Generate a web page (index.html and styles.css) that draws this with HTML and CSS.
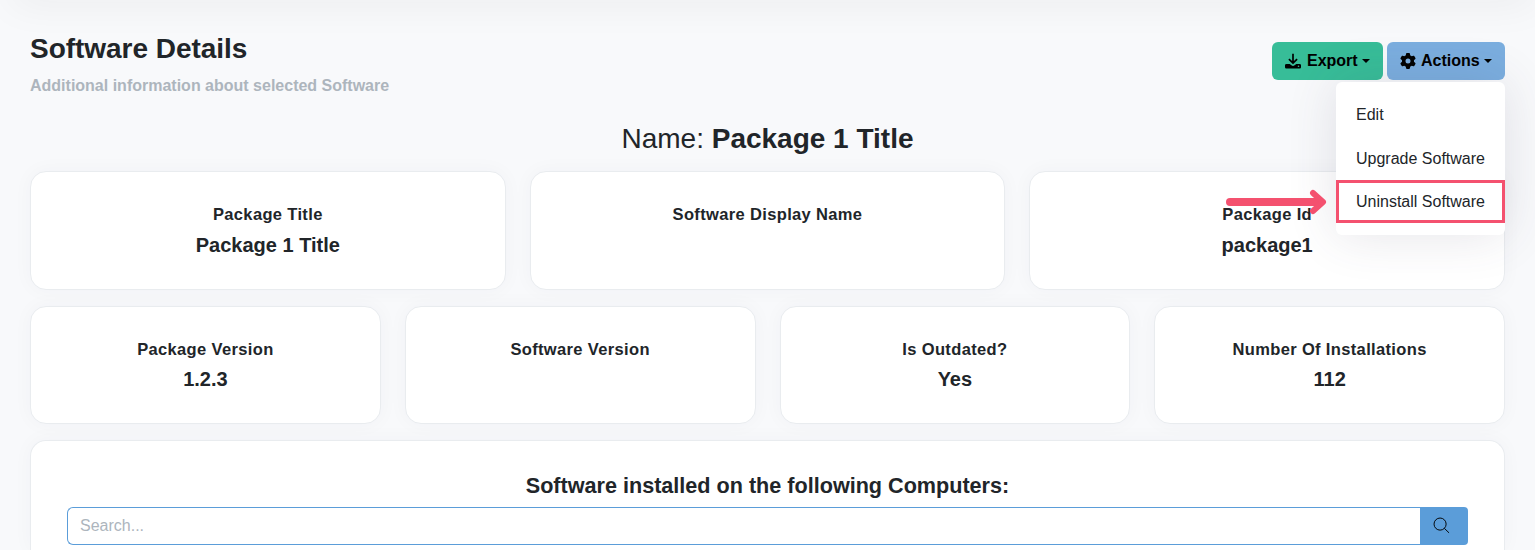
FILE: index.html
```html
<!DOCTYPE html>
<html lang="en">
<head>
<meta charset="utf-8">
<title>Software Details</title>
<link rel="stylesheet" href="styles.css">
</head>
<body>
<div class="topbar-shadow"></div>
<main class="page">
  <header class="page-header">
    <div>
      <h1 class="title">Software Details</h1>
      <p class="subtitle">Additional information about selected Software</p>
    </div>
    <div class="buttons">
      <button class="btn btn-export">
        <svg class="icon" viewBox="0 0 16 16"><path d="M8 .8v9M3.900 6.200 8 10.100l4.100-3.900" fill="none" stroke="currentColor" stroke-width="1.700"/><path d="M1.500 11h3.200l1.700 1.300q1.600 1.200 3.200 0L11.300 11h3.200Q16 11 16 12.300v1.900q0 1.300-1.300 1.300H1.300Q0 15.500 0 14.200v-1.900Q0 11 1.500 11Z"/><circle cx="13.500" cy="13.300" r=".8" fill="#37bd98"/></svg>
        <span>Export</span><i class="caret"></i>
      </button>
      <div class="dropdown">
        <button class="btn btn-actions">
          <svg class="icon" viewBox="0 0 512 512"><path d="M495.900 166.600c3.200 8.700 .5 18.400-6.400 24.600l-43.300 39.400c1.100 8.300 1.700 16.800 1.700 25.400s-.6 17.100-1.700 25.400l43.300 39.400c6.900 6.200 9.600 15.900 6.400 24.600c-4.400 11.900-9.700 23.300-15.800 34.300l-4.700 8.100c-6.600 11-14 21.400-22.100 31.200c-5.900 7.200-15.700 9.600-24.500 6.800l-55.700-17.700c-13.400 10.300-28.200 18.900-44 25.400l-12.500 57.100c-2 9.100-9 16.300-18.200 17.800c-13.800 2.300-28 3.500-42.500 3.500s-28.700-1.200-42.500-3.500c-9.200-1.500-16.200-8.700-18.200-17.800l-12.500-57.100c-15.800-6.500-30.600-15.100-44-25.400L83.100 425.900c-8.800 2.800-18.600 .3-24.500-6.800c-8.100-9.800-15.500-20.200-22.100-31.200l-4.700-8.100c-6.100-11-11.400-22.400-15.800-34.300c-3.200-8.700-.5-18.400 6.400-24.600l43.300-39.400C64.600 273.100 64 264.600 64 256s.6-17.100 1.700-25.400L22.400 191.200c-6.900-6.200-9.600-15.900-6.400-24.600c4.400-11.900 9.700-23.300 15.800-34.300l4.700-8.100c6.600-11 14-21.400 22.100-31.200c5.900-7.200 15.700-9.600 24.500-6.800l55.700 17.700c13.400-10.300 28.200-18.900 44-25.400l12.500-57.100c2-9.100 9-16.300 18.200-17.800C227.300 1.200 241.500 0 256 0s28.700 1.200 42.500 3.500c9.200 1.500 16.200 8.700 18.200 17.800l12.500 57.100c15.800 6.500 30.600 15.100 44 25.400l55.700-17.700c8.800-2.800 18.600-.3 24.500 6.800c8.100 9.800 15.500 20.200 22.100 31.200l4.700 8.100c6.100 11 11.400 22.400 15.800 34.300zM256 336a80 80 0 1 0 0-160 80 80 0 1 0 0 160z"/></svg>
          <span>Actions</span><i class="caret"></i>
        </button>
        <div class="menu">
          <a class="menu-item">Edit</a>
          <a class="menu-item">Upgrade Software</a>
          <a class="menu-item highlighted">Uninstall Software
            <svg class="arrow" viewBox="0 0 102 26"><path class="arrow-shaft" d="M4 13H92"/><path class="arrow-head" d="M87 4 97 13 87 22Z"/><path class="arrow-head" d="M87 4 97 13 87 22" /></svg>
          </a>
        </div>
      </div>
    </div>
  </header>

  <h2 class="name">Name: <b>Package 1 Title</b></h2>

  <section class="cards three">
    <div class="card"><h5>Package Title</h5><p>Package 1 Title</p></div>
    <div class="card"><h5>Software Display Name</h5></div>
    <div class="card"><h5>Package Id</h5><p>package1</p></div>
  </section>
  <section class="cards four">
    <div class="card"><h5>Package Version</h5><p>1.2.3</p></div>
    <div class="card"><h5>Software Version</h5></div>
    <div class="card"><h5>Is Outdated?</h5><p>Yes</p></div>
    <div class="card"><h5>Number Of Installations</h5><p>112</p></div>
  </section>

  <section class="card computers">
    <h3>Software installed on the following Computers:</h3>
    <div class="search">
      <input class="search-input" type="text" placeholder="Search...">
      <button class="search-btn" aria-label="Search">
        <svg viewBox="0 0 18 18"><circle cx="7.500" cy="7.500" r="6.400"/><path d="m12 12 5 4.800"/></svg>
      </button>
    </div>
  </section>
</main>
</body>
</html>
```
FILE: styles.css
```css
* { box-sizing: border-box; }
body {
  margin: 0;
  height: 550px;
  overflow: hidden;
  background: #f8f9fb;
  color: #212529;
  font-family: "Liberation Sans", Arial, sans-serif;
  font-size: 16px;
}
h1, h2, h3, h5, p { margin: 0; }
.topbar-shadow {
  position: absolute;
  top: -20px;
  left: 12px;
  right: 0;
  height: 20px;
  box-shadow: 0 0 40px rgba(30, 32, 37, .085);
}
.page {
  display: flex;
  flex-direction: column;
  height: 550px;
  padding: 32px 30px 0;
}
.page-header {
  display: flex;
  flex: none;
  justify-content: space-between;
  align-items: flex-start;
  height: 89px;
}
.title { font-size: 28px; line-height: 34px; font-weight: 700; letter-spacing: -.03px; }
.subtitle { margin-top: 8px; line-height: 24px; font-weight: 700; color: #adb5bd; }
.buttons { display: flex; gap: 4px; padding-top: 10px; }
.btn {
  display: flex;
  align-items: center;
  height: 38px;
  padding: 0 13px;
  border: 0;
  border-radius: 6px;
  color: #000;
  font: 700 16px/24px "Liberation Sans", Arial, sans-serif;
}
.btn-export { width: 111px; background: #37bd98; }
.btn-actions { width: 118px; background: #7baedf; }
.icon { width: 16px; height: 16px; margin: 0 6px 1px 0; fill: currentColor; flex: none; }
.btn-actions .icon { margin-right: 5px; }
.caret {
  margin: 0 0 1px 4px;
  border-top: 4px solid;
  border-left: 4px solid transparent;
  border-right: 4px solid transparent;
}
.dropdown { position: relative; }
.menu {
  position: absolute;
  z-index: 2;
  top: 40px;
  right: 0;
  width: 169px;
  height: 153px;
  padding-top: 11px;
  border-radius: 6px;
  background: #fff;
  box-shadow: 0 0 50px rgba(70, 63, 90, .14);
}
.menu-item {
  display: block;
  height: 43.500px;
  padding-left: 20px;
  line-height: 43.500px;
  white-space: nowrap;
}
.highlighted {
  position: relative;
  height: 43px;
  line-height: 43px;
}
.highlighted::before {
  content: "";
  position: absolute;
  inset: 0;
  border: 3px solid #f4516f;
}
.arrow { position: absolute; left: -110px; top: 9px; width: 102px; height: 26px; }
.arrow path { stroke: #f4516f; stroke-linecap: round; stroke-linejoin: round; fill: none; }
.arrow .arrow-shaft { stroke-width: 8; }
.arrow .arrow-head { stroke-width: 6; }
.arrow .arrow-head:nth-child(2) { stroke: none; fill: none; }
.name {
  flex: none;
  height: 50px;
  line-height: 35px;
  font-size: 28px;
  font-weight: 400;
  text-align: center;
}
.cards { display: grid; flex: none; column-gap: 24px; margin-bottom: 16px; }
.three { grid-template-columns: repeat(3, 1fr); height: 119px; }
.four { grid-template-columns: repeat(4, 1fr); height: 118px; }
.card {
  padding-top: 33px;
  border: 1px solid #e9ecef;
  border-radius: 16px;
  background: #fff;
  box-shadow: 0 0 20px rgba(60, 70, 90, .035);
  text-align: center;
}
.card h5 { font-size: 16.500px; line-height: 19px; letter-spacing: .35px; }
.card p { margin-top: 9px; font-size: 20px; line-height: 24px; font-weight: 700; }
.four p { margin-top: 8px; }
.card.computers {
  flex: 1;
  min-height: 0;
  padding: 32px 36px 0;
  border-bottom: 0;
  border-radius: 16px 16px 0 0;
}
.computers h3 { font-size: 21.600px; line-height: 26px; height: 34px; }
.search { display: flex; height: 38px; }
.search-input {
  flex: 1;
  padding: 0 12px;
  border: 1px solid #5b9dd9;
  border-right: 0;
  border-radius: 6px 0 0 6px;
  font: 16px "Liberation Sans", Arial, sans-serif;
}
.search-input::placeholder { color: #adb5bd; opacity: 1; }
.search-btn {
  width: 48px;
  padding: 0 0 2px 13px;
  display: flex;
  align-items: center;
  border: 0;
  border-radius: 0 4px 4px 0;
  background: #5b9dd9;
}
.search-btn svg { width: 17px; height: 17px; fill: none; stroke: #000; stroke-width: 1; }
```
